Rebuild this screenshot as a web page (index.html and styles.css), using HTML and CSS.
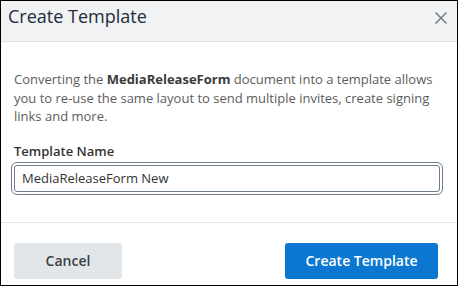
FILE: index.html
```html
<!DOCTYPE html>
<html>
  <head>
    <link rel="stylesheet" href="styles.css">
  </head>
  <body>
    <div class="dialog">
      <div class="dialog-header">
        <h1>Create Template</h1>
        <button type="button" class="close" aria-label="Close">
          <svg width="12" height="12" viewBox="0 0 12 12">
            <path d="M0.5 0.5L11.5 11.5M11.5 0.5L0.5 11.5" stroke="#6f7b88" stroke-width="1.5" fill="none" />
          </svg>
        </button>
      </div>

      <div class="dialog-body">
        <p>Converting the <strong>MediaReleaseForm</strong> document into a template allows you to re-use the same layout to send multiple invites, create signing links and more.</p>
        <label for="templateName">Template Name</label>
        <input type="text" id="templateName" value="MediaReleaseForm New" autofocus />
      </div>

      <div class="dialog-footer">
        <button type="button" id="cancel">Cancel</button>
        <button type="button" id="create">Create Template</button>
      </div>
    </div>
  </body>
</html>
```

FILE: styles.css
```css
body {
  margin: 0;
  font-family: "Open Sans", sans-serif;
  background: white;
}

.dialog {
  width: 458px;
  height: 286px;
  box-sizing: border-box;
  border: 1px solid #000;
  display: flex;
  flex-direction: column;
}

.dialog-header {
  display: flex;
  align-items: flex-start;
  justify-content: space-between;
  height: 41px;
  padding: 3px 10px 0 7px;
  box-sizing: border-box;
  background: #f0f2f4;
  border-bottom: 1px solid #e1e4e7;
}

h1 {
  margin: 0;
  font-size: 18px;
  font-weight: 500;
  line-height: 24px;
  color: #222c3a;
}

.close {
  border: none;
  background: none;
  padding: 0;
  margin-top: 8px;
  width: 12px;
  height: 12px;
  display: flex;
  cursor: pointer;
}

.dialog-body {
  padding: 28px 17px 30px 13px;
  border-bottom: 1px solid #e3e5e8;
}

p {
  margin: 0 0 16px;
  font-size: 13px;
  line-height: 18.5px;
  color: #5c5c5c;
}

p strong {
  font-weight: 700;
  color: #3a3a3a;
}

label {
  display: block;
  margin-bottom: 5px;
  font-size: 13px;
  font-weight: 600;
  line-height: 18px;
  color: #333;
}

input[type="text"] {
  display: block;
  width: 100%;
  height: 27px;
  box-sizing: border-box;
  padding: 0 7px;
  border: 1px solid #6e7d8c;
  border-radius: 3px;
  outline: 1px solid #6e7d8c;
  outline-offset: 2px;
  font-family: "Open Sans", sans-serif;
  font-size: 13px;
  color: #333;
  caret-color: #222;
}

.dialog-footer {
  display: flex;
  justify-content: space-between;
  padding: 20px 19px 0 13px;
}

.dialog-footer button {
  height: 36px;
  border: none;
  border-radius: 3px;
  font-family: "Open Sans", sans-serif;
  font-size: 14px;
  font-weight: 600;
  cursor: pointer;
}

#cancel {
  width: 108px;
  background: #e3e6e9;
  color: #3a4049;
}

#create {
  width: 153px;
  background: #0b77d1;
  color: white;
}
```
